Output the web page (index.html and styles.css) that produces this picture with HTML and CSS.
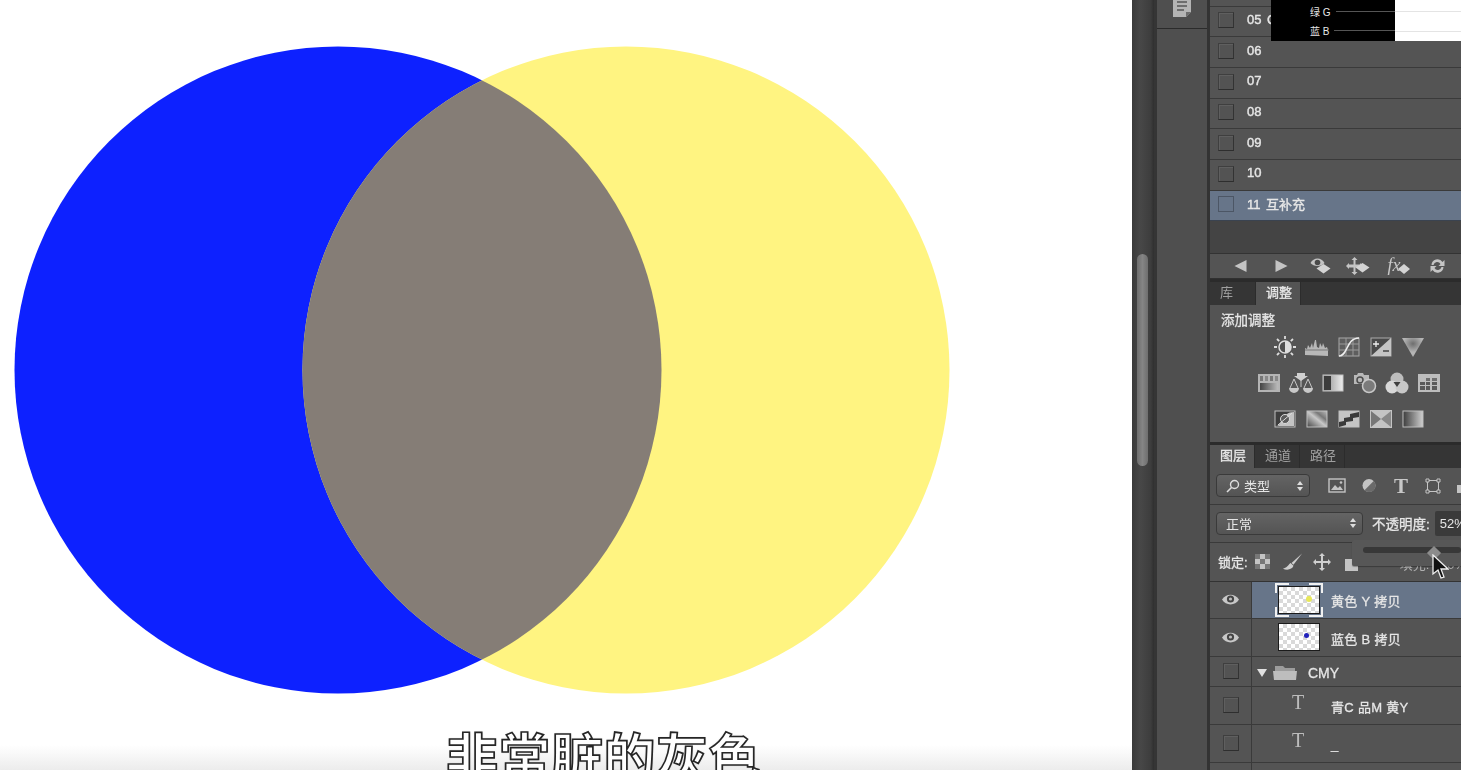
FILE: index.html
```html
<!DOCTYPE html>
<html lang="zh-CN">
<head>
    <meta charset="UTF-8">
    <meta name="viewport" content="width=device-width, initial-scale=1.0">
    <title>互补色 Photoshop</title>
    <link rel="stylesheet" href="styles.css">
</head>
<body>
    <div class="app">
        <main class="canvas">
            <svg class="circles" width="1132" height="770" viewBox="0 0 1132 770">
                <defs>
                    <clipPath id="blueClip"><circle cx="338" cy="370" r="323.5"/></clipPath>
                </defs>
                <circle cx="338" cy="370" r="323.5" fill="#0d21ff"/>
                <circle cx="626" cy="370" r="323.5" fill="#fff481"/>
                <circle cx="626" cy="370" r="323.5" fill="#857d76" clip-path="url(#blueClip)"/>
            </svg>
            <div class="subtitle">非常脏的灰色</div>
        </main>

        <div class="scroll-strip"><div class="scroll-thumb"></div></div>

        <div class="tool-col">
            <div class="tool-cell">
                <svg width="20" height="18" viewBox="0 0 20 18"><path d="M1 0h18v13l-5 5H1z" fill="#b4b4b4"/><path d="M14 18v-5h5z" fill="#6d6d6d"/><path d="M5 3h10M5 7h10M5 11h7" stroke="#555" stroke-width="1.600"/></svg>
            </div>
        </div>

        <aside class="panel">
            <div class="actions">
                <div class="action-top"></div>
                <div class="row action-row first"><span class="check"></span><span class="row-label">05 C</span></div>
                <div class="row action-row"><span class="check"></span><span class="row-label">06</span></div>
                <div class="row action-row"><span class="check"></span><span class="row-label">07</span></div>
                <div class="row action-row"><span class="check"></span><span class="row-label">08</span></div>
                <div class="row action-row"><span class="check"></span><span class="row-label">09</span></div>
                <div class="row action-row"><span class="check"></span><span class="row-label">10</span></div>
                <div class="row action-row selected"><span class="check"></span><span class="row-label">11 互补充</span></div>
                <div class="action-empty"></div>
            </div>

            <div class="action-bar">
                <svg width="14" height="14" viewBox="0 0 14 14"><path d="M13 1v12L1 7z" fill="#c4c4c4"/></svg>
                <svg width="14" height="14" viewBox="0 0 14 14"><path d="M1 1v12l12-6z" fill="#c4c4c4"/></svg>
                <svg width="22" height="18" viewBox="0 0 22 18"><path d="M1 6c3-6 11-6 14 0-3 4-11 4-14 0z" fill="#c4c4c4"/><circle cx="8" cy="5.500" r="2.800" fill="#4a4a4a"/><path d="M14 7l7 4.500-7 5-7-5z" fill="#d4d4d4"/></svg>
                <svg width="24" height="20" viewBox="0 0 24 20"><path d="M9 1l3 3h-2v4.500h4.500V7l3 3-3 3v-1.500H10V16h2l-3 3-3-3h2v-4.500H3.500V13l-3-3 3-3v1.500H8V4H6z" fill="#c4c4c4"/><path d="M17 7l7 4.500-7 5-7-5z" fill="#d4d4d4"/></svg>
                <span class="fx-wrap"><span class="fx">fx</span><svg width="12" height="10" viewBox="0 0 12 10"><path d="M6 0l6 5-6 5-6-5z" fill="#d4d4d4"/></svg></span>
                <svg width="18" height="18" viewBox="0 0 18 18"><path d="M3 8a6 6 0 0 1 11-3l2-2v6h-6l2-2a3.800 3.800 0 0 0-7 1zM15 10a6 6 0 0 1-11 3l-2 2V9h6l-2 2a3.800 3.800 0 0 0 7-1z" fill="#c4c4c4"/></svg>
            </div>

            <div class="gap first-gap"></div>
            <div class="tabs">
                <span class="tab lib-tab">库</span>
                <span class="tab active">调整</span>
            </div>
            <section class="adjust">
                <div class="adjust-title">添加调整</div>
                <div class="icon-row row-a">
                    <svg width="24" height="24" viewBox="0 0 24 24"><circle cx="12" cy="12" r="6" fill="#4f4f4f" stroke="#ddd" stroke-width="1.500"/><path d="M12 6a6 6 0 0 1 0 12z" fill="#ddd"/><path d="M12 1v3M12 20v3M1 12h3M20 12h3M4 4l2.200 2.200M17.800 17.800L20 20M4 20l2.200-2.200M17.800 6.200L20 4" stroke="#ddd" stroke-width="1.800"/></svg>
                    <svg width="26" height="18" viewBox="0 0 26 18"><path d="M1 17v-7l2 1 1-4 2 3 2-5 1 5 2-8 1 0 1 7 2 1 1-5 2 4 1-4 2 5 2-1 1 3v6z" fill="#b8b8b8"/><path d="M1 12h24" stroke="#777"/></svg>
                    <svg width="22" height="20" viewBox="0 0 22 20"><rect x="1" y="1" width="20" height="18" fill="#5e5e5e" stroke="#a8a8a8"/><path d="M1 7h20M1 13h20M8 1v18M15 1v18" stroke="#9a9a9a"/><path d="M1 19c9 0 7-18 20-18" fill="none" stroke="#eee" stroke-width="1.600"/></svg>
                    <svg width="22" height="20" viewBox="0 0 22 20"><rect x="1" y="1" width="20" height="18" fill="#4a4a4a" stroke="#aaa"/><path d="M1 19L21 1v18z" fill="#c4c4c4"/><path d="M3 7h6M6 4v6" stroke="#eee" stroke-width="1.300"/><path d="M13 14h6" stroke="#444" stroke-width="1.500"/></svg>
                    <svg width="22" height="20" viewBox="0 0 22 20"><defs><radialGradient id="vib" cx="50%" cy="30%" r="45%"><stop offset="0" stop-color="#6e6e6e"/><stop offset="1" stop-color="#b5b5b5"/></radialGradient></defs><path d="M0 1h22L11 20z" fill="url(#vib)"/></svg>
                </div>
                <div class="icon-row row-b">
                    <svg width="22" height="18" viewBox="0 0 22 18"><defs><linearGradient id="hsl" x1="0" x2="1"><stop offset="0" stop-color="#444"/><stop offset="1" stop-color="#bbb"/></linearGradient></defs><rect width="22" height="18" fill="#b5b5b5"/><rect x="2" y="2" width="3" height="5" fill="#777"/><rect x="7" y="2" width="3" height="5" fill="#888"/><rect x="12" y="2" width="3" height="5" fill="#777"/><rect x="17" y="2" width="3" height="5" fill="#888"/><rect x="2" y="9" width="18" height="7" fill="url(#hsl)"/></svg>
                    <svg width="24" height="22" viewBox="0 0 24 22"><path d="M8 1h8v3h3l-7 5-7-5h3z" fill="#d0d0d0"/><path d="M5 7L1 16M5 7l4 9M19 7l-4 9M19 7l4 9M12 8v7" stroke="#c8c8c8" fill="none"/><path d="M0 16h10a5 5 0 0 1-10 0zM14 16h10a5 5 0 0 1-10 0z" fill="#c8c8c8"/></svg>
                    <svg width="22" height="18" viewBox="0 0 22 18"><defs><linearGradient id="bw" x1="0" x2="1"><stop offset="0" stop-color="#888"/><stop offset="1" stop-color="#eee"/></linearGradient></defs><rect x="1" y="1" width="20" height="16" fill="url(#bw)" stroke="#c4c4c4"/><rect x="2" y="2" width="7" height="14" fill="#3c3c3c"/></svg>
                    <svg width="24" height="22" viewBox="0 0 24 22"><path d="M1 3h3l1-2h5l1 2h5v9H1z" fill="#b8b8b8"/><circle cx="7" cy="8" r="3" fill="none" stroke="#4c4c4c" stroke-width="1.500"/><circle cx="16" cy="14" r="6.500" fill="#7b7b7b" stroke="#c8c8c8" stroke-width="1.500"/></svg>
                    <svg width="24" height="22" viewBox="0 0 24 22"><circle cx="12" cy="7" r="6.500" fill="#bdbdbd"/><circle cx="7" cy="15" r="6.500" fill="#d8d8d8"/><circle cx="17" cy="15" r="6.500" fill="#c8c8c8"/><path d="M8.500 10l7 0-3.500 5z" fill="#3f3f3f"/></svg>
                    <svg width="22" height="18" viewBox="0 0 22 18"><rect width="22" height="18" fill="#bdbdbd"/><path d="M8 4h4v3H8zM14 4h5v3h-5z" fill="#6e6e6e"/><path d="M2 8h5v3H2zM8 8h4v3H8zM14 8h5v3h-5zM2 12h5v4H2zM8 12h4v4H8zM14 12h5v4h-5z" fill="#5a5a5a"/></svg>
                </div>
                <div class="icon-row row-c">
                    <svg width="22" height="18" viewBox="0 0 22 18"><rect x="1" y="1" width="20" height="16" fill="#3e3e3e" stroke="#c0c0c0"/><path d="M2 16c7 0 5-14 18-14v14z" fill="#c4c4c4"/><circle cx="11" cy="9" r="4.500" fill="#5a5a5a" stroke="#ddd"/><path d="M4 15L18 3" stroke="#ddd"/></svg>
                    <svg width="22" height="18" viewBox="0 0 22 18"><defs><linearGradient id="pf" x1="0" y1="1" x2="1" y2="0"><stop offset="0" stop-color="#444"/><stop offset=".5" stop-color="#c8c8c8"/><stop offset=".7" stop-color="#777"/><stop offset="1" stop-color="#bbb"/></linearGradient></defs><rect x="1" y="1" width="20" height="16" fill="url(#pf)" stroke="#c0c0c0"/></svg>
                    <svg width="22" height="18" viewBox="0 0 22 18"><rect x="1" y="1" width="20" height="16" fill="#c4c4c4" stroke="#c0c0c0"/><path d="M1 12l5-1v-3l6-1V4l9-2v5l-6 1v3l-7 1v3l-7 2z" fill="#3a3a3a"/></svg>
                    <svg width="22" height="18" viewBox="0 0 22 18"><rect width="22" height="18" fill="#c4c4c4"/><path d="M1 1l10 8L1 17z" fill="#777"/><path d="M21 1l-10 8 10 8z" fill="#888"/></svg>
                    <svg width="22" height="18" viewBox="0 0 22 18"><defs><linearGradient id="gm" x1="0" x2="1"><stop offset="0" stop-color="#3c3c3c"/><stop offset="1" stop-color="#d0d0d0"/></linearGradient></defs><rect x="1" y="1" width="20" height="16" fill="url(#gm)" stroke="#bdbdbd"/></svg>
                </div>
            </section>

            <div class="gap"></div>
            <div class="tabs">
                <span class="tab active">图层</span>
                <span class="tab">通道</span>
                <span class="tab">路径</span>
            </div>
            <section class="layers">
                <div class="tool-row filter-row">
                    <div class="select filter-select">
                        <svg width="14" height="14" viewBox="0 0 14 14"><circle cx="8.500" cy="5.500" r="4" fill="none" stroke="#ddd" stroke-width="1.400"/><path d="M5.500 8.500L1 13" stroke="#ddd" stroke-width="1.600"/></svg>
                        <span>类型</span>
                        <span class="updown"></span>
                    </div>
                    <div class="filter-icons">
                        <svg width="18" height="15" viewBox="0 0 18 15"><rect x="1" y="1" width="16" height="13" fill="none" stroke="#c4c4c4" stroke-width="1.400"/><path d="M3 12l4-5 3 3 2-2 3 4z" fill="#c4c4c4"/><circle cx="13" cy="4.500" r="1.300" fill="#c4c4c4"/></svg>
                        <svg width="15" height="15" viewBox="0 0 15 15"><circle cx="7.500" cy="7.500" r="6.500" fill="#c4c4c4"/><path d="M12.200 3A6.500 6.500 0 0 1 3 12.200z" fill="#6a6a6a"/></svg>
                        <span class="type-t small">T</span>
                        <svg width="16" height="16" viewBox="0 0 16 16"><rect x="2.500" y="2.500" width="11" height="11" fill="none" stroke="#c4c4c4"/><path d="M1 1h3v3H1zM12 1h3v3h-3zM1 12h3v3H1zM12 12h3v3h-3z" fill="#4f4f4f" stroke="#c4c4c4"/></svg>
                        <span class="cut-icon"></span>
                    </div>
                </div>
                <div class="tool-row blend-row">
                    <div class="select blend-select">
                        <span>正常</span>
                        <span class="updown"></span>
                    </div>
                    <span class="field-label">不透明度:</span>
                    <span class="opacity-box">52%</span>
                </div>
                <div class="tool-row lock-row">
                    <span class="field-label lock-label">锁定:</span>
                    <svg class="lock-a" width="15" height="15" viewBox="0 0 15 15"><rect width="15" height="15" fill="#c4c4c4"/><path d="M0 0h5v5H0zM10 0h5v5h-5zM5 5h5v5H5zM0 10h5v5H0zM10 10h5v5h-5z" fill="#777"/></svg>
                    <svg class="lock-b" width="21" height="18" viewBox="0 0 22 18"><path d="M21 0L10 10l2 2z" fill="#cfcfcf"/><path d="M9 10c-2 1-2 4-8 6 4 2 10 1 11-3z" fill="#cfcfcf"/></svg>
                    <svg class="lock-c" width="18" height="18" viewBox="0 0 18 18"><path d="M9 0l3 3h-2v5h5V6l3 3-3 3v-2h-5v5h2l-3 3-3-3h2v-5H3v2L0 9l3-3v2h5V3H6z" fill="#cfcfcf"/></svg>
                    <span class="lock-d"></span>
                    <span class="fill-label">填充: 100%</span>
                </div>

                <div class="layer-row selected">
                    <span class="eye-cell"><svg class="eye" width="17" height="11" viewBox="0 0 17 11"><path d="M0 5.500C4-1 13-1 17 5.500 13 12 4 12 0 5.500z" fill="#c8c8c8"/><circle cx="8.500" cy="5" r="3.600" fill="#444"/><circle cx="8.500" cy="5" r="1.600" fill="#bbb"/></svg></span>
                    <span class="thumb-wrap framed"><span class="thumb"><span class="dot yellow"></span></span></span>
                    <span class="layer-name">黄色 Y 拷贝</span>
                </div>
                <div class="layer-row tall">
                    <span class="eye-cell"><svg class="eye" width="17" height="11" viewBox="0 0 17 11"><path d="M0 5.500C4-1 13-1 17 5.500 13 12 4 12 0 5.500z" fill="#c8c8c8"/><circle cx="8.500" cy="5" r="3.600" fill="#444"/><circle cx="8.500" cy="5" r="1.600" fill="#bbb"/></svg></span>
                    <span class="thumb-wrap"><span class="thumb"><span class="dot blue"></span></span></span>
                    <span class="layer-name">蓝色 B 拷贝</span>
                </div>
                <div class="layer-row group">
                    <span class="eye-cell"><span class="check"></span></span>
                    <span class="arrow"></span>
                    <svg class="folder" width="24" height="15" viewBox="0 0 24 15"><path d="M2 3V1h8l2 2h10v3H2z" fill="#9c9c9c"/><path d="M0 6h24l-1 9H1z" fill="#bdbdbd"/></svg>
                    <span class="layer-name group-name">CMY</span>
                </div>
                <div class="layer-row tall">
                    <span class="eye-cell"><span class="check"></span></span>
                    <span class="type-t">T</span>
                    <span class="layer-name">青C 品M 黄Y</span>
                </div>
                <div class="layer-row tall">
                    <span class="eye-cell"><span class="check"></span></span>
                    <span class="type-t">T</span>
                    <span class="layer-name">_</span>
                </div>
                <div class="layer-row"><span class="eye-cell"></span></div>
            </section>
        </aside>

        <!-- colour chart video overlay, top of the panel -->
        <div class="overlay">
            <div class="overlay-black">
                <div class="overlay-line"><span>绿 G</span><i></i></div>
                <div class="overlay-line"><span>蓝 B</span><i></i></div>
            </div>
            <div class="overlay-white">
                <div class="white-line"></div>
                <div class="white-line"></div>
            </div>
        </div>

        <!-- opacity slider popup -->
        <div class="slider-pop">
            <div class="slider-track"></div>
            <div class="slider-knob"></div>
        </div>
        <svg class="cursor" width="18" height="25" viewBox="0 0 18 25"><path d="M2 1v19l5-4 3 8 3-1-3-8h7z" fill="#111" stroke="#eee" stroke-width="1.300"/></svg>
    </div>
</body>
</html>
```

FILE: styles.css
```css
* {
    box-sizing: border-box;
}
html, body {
    margin: 0;
    height: 100%;
    overflow: hidden;
}
body {
    font-family: "Liberation Sans", "Noto Sans CJK SC", sans-serif;
    background: #fff;
    color: #e6e6e6;
}
.app {
    position: relative;
    display: flex;
    width: 1461px;
    height: 770px;
    overflow: hidden;
}

/* canvas */
.canvas {
    position: relative;
    width: 1132px;
    height: 770px;
    background: linear-gradient(to bottom, #fff 0, #fff 745px, #ececec 770px);
    overflow: hidden;
}
.circles {
    position: absolute;
    left: 0;
    top: 0;
}
.subtitle {
    position: absolute;
    left: 446px;
    top: 720px;
    width: 330px;
    font-family: "Noto Sans CJK SC", sans-serif;
    font-size: 52px;
    font-weight: bold;
    letter-spacing: 0.5px;
    line-height: 70px;
    white-space: nowrap;
    color: #fff;
    -webkit-text-stroke: 1.700px #262626;
    text-shadow: 0 0 2px #999;
}

/* left strips */
.scroll-strip {
    width: 22px;
    flex-shrink: 0;
    background: linear-gradient(to right, #3a3a3a, #474747 40%, #3d3d3d 85%, #2f2f2f);
    padding: 254px 0 0 5px;
}
.scroll-thumb {
    width: 11px;
    height: 212px;
    border-radius: 6px;
    background: linear-gradient(to right, #6e6e6e, #858585 50%, #6e6e6e);
}
.tool-col {
    width: 56px;
    flex-shrink: 0;
    background: #4f4f4f;
    border-left: 3px solid #353535;
    border-right: 3px solid #333;
}
.tool-cell {
    height: 29px;
    border-bottom: 1px solid #2b2b2b;
    display: flex;
    justify-content: center;
    align-items: flex-end;
    padding-bottom: 11px;
}

/* panel */
.panel {
    width: 251px;
    flex-shrink: 0;
    background: #2f2f2f;
    display: flex;
    flex-direction: column;
    font-size: 13px;
    filter: blur(0.35px);
}
.check {
    display: block;
    width: 16px;
    height: 16px;
    background: #535353;
    border: 1px solid #3f3f3f;
    border-right-color: #333;
    border-bottom-color: #2e2e2e;
    box-shadow: inset 1px 1px 0 #5f5f5f;
}
.action-top {
    height: 6.500px;
    background: #545454;
    border-bottom: 1px solid #3a3a3a;
}
.row {
    display: flex;
    align-items: center;
}
.action-row {
    height: 30.700px;
    background: #545454;
    border-bottom: 1px solid #3a3a3a;
    padding-left: 8px;
}
.action-row .check {
    margin-bottom: 2px;
}
.action-row.selected {
    height: 30px;
    background: #677589;
    border-bottom-color: #3a4350;
}
.action-row.selected .check {
    background: #677589;
    border-color: #4c5665;
    box-shadow: none;
}
.row-label {
    margin: 0 0 4px 13px;
    font-size: 13px;
    -webkit-text-stroke: 0.4px #e6e6e6;
    word-spacing: 2px;
}
.action-empty {
    height: 32px;
    background: #444;
}
.action-bar {
    height: 26px;
    background: #545454;
    border-top: 1px solid #333;
    border-bottom: 1px solid #303030;
    display: flex;
    align-items: center;
    padding-left: 11px;
}
.action-bar > svg,
.action-bar > .fx-wrap {
    flex: 0 0 39px;
}
.action-bar > svg:nth-child(2),
.action-bar > .fx-wrap {
    margin-left: 2px;
}
.action-bar > svg:nth-child(4) {
    margin-left: -2px;
}
.fx-wrap {
    display: flex;
    align-items: flex-end;
    justify-content: center;
}
.fx {
    font-family: "Liberation Serif", serif;
    font-style: italic;
    font-size: 18px;
    font-weight: normal;
    color: #c8c8c8;
    line-height: 17px;
}
.fx-wrap svg {
    margin-left: -3px;
}
.gap {
    height: 3px;
    background: #2b2b2b;
}
.first-gap {
    height: 3.300px;
}
.tabs {
    height: 23px;
    background: #353535;
    display: flex;
}
.tab {
    width: 45px;
    padding-left: 10px;
    line-height: 22px;
    font-weight: normal;
    color: #a0a0a0;
    border-right: 1px solid #2c2c2c;
}
.lib-tab {
    width: 46px;
}
.tab.active {
    background: #545454;
    color: #e8e8e8;
    -webkit-text-stroke: 0.3px #e8e8e8;
}
.adjust {
    height: 137px;
    background: #545454;
    padding: 7px 0 0 11px;
}
.adjust-title {
    line-height: 17px;
    font-size: 13.500px;
    -webkit-text-stroke: 0.3px #e6e6e6;
}
.icon-row {
    display: flex;
    align-items: center;
    height: 24px;
}
.icon-row svg {
    flex: 0 0 32px;
}
.row-a {
    margin: 6px 0 0 48px;
}
.row-b {
    margin: 12px 0 0 32px;
}
.row-c {
    margin: 12px 0 0 48px;
}
.layers {
    flex: 1;
    background: #545454;
    overflow: hidden;
}
.tool-row {
    display: flex;
    align-items: center;
    border-bottom: 1px solid #3a3a3a;
}
.filter-row {
    height: 37px;
    padding-left: 6px;
}
.blend-row {
    height: 38px;
    padding-left: 6px;
}
.lock-row {
    height: 39px;
    padding-left: 8px;
    border-bottom-color: #333;
}
.select {
    flex-shrink: 0;
    height: 23px;
    display: flex;
    align-items: center;
    gap: 4px;
    background: linear-gradient(to bottom, #646464, #545454);
    border: 1px solid #3a3a3a;
    border-radius: 4px;
    padding-left: 9px;
    font-weight: normal;
    position: relative;
}
.filter-select {
    width: 94px;
}
.blend-select {
    width: 147px;
}
.updown {
    position: absolute;
    right: 6px;
    top: 5.500px;
    width: 0;
    height: 0;
    border-left: 3.500px solid transparent;
    border-right: 3.500px solid transparent;
    border-bottom: 4px solid #ddd;
}
.updown::after {
    content: "";
    position: absolute;
    left: -3.500px;
    top: 6px;
    border-left: 3.500px solid transparent;
    border-right: 3.500px solid transparent;
    border-top: 4px solid #ddd;
}
.filter-icons {
    display: flex;
    align-items: center;
    margin-left: 11px;
}
.filter-icons > svg,
.filter-icons > .type-t {
    flex: 0 0 32px;
    text-align: center;
}
.type-t {
    font-family: "Liberation Serif", serif;
    font-weight: normal;
    font-size: 20px;
    line-height: 20px;
    color: #bcbcbc;
}
.type-t.small {
    font-size: 21px;
    font-weight: bold;
    color: #c8c8c8;
}
.cut-icon {
    width: 4px;
    height: 8px;
    background: #c4c4c4;
    margin: 7px 0 0 8px;
    flex-shrink: 0;
}
.field-label {
    flex-shrink: 0;
    font-size: 13.500px;
    -webkit-text-stroke: 0.3px #e6e6e6;
    white-space: nowrap;
}
.blend-row .field-label {
    margin-left: 9px;
}
.lock-label {
    font-size: 13px;
}
.opacity-box {
    flex-shrink: 0;
    margin-left: 5px;
    width: 40px;
    height: 25px;
    line-height: 25px;
    padding-left: 5px;
    background: #3a3a3a;
    font-weight: normal;
    font-size: 13px;
    border-radius: 2px;
    white-space: nowrap;
}
.lock-a {
    margin-left: 7px;
    flex-shrink: 0;
}
.lock-b {
    margin-left: 12px;
    flex-shrink: 0;
}
.lock-c {
    margin-left: 10px;
    flex-shrink: 0;
}
.lock-d {
    flex-shrink: 0;
    width: 13px;
    height: 12px;
    margin: 7px 0 0 14px;
    background: #c4c4c4;
}
.fill-label {
    margin: 3px 0 0 42px;
    font-size: 13px;
    color: #b0b0b0;
    white-space: nowrap;
}
.layer-row {
    height: 30px;
    display: flex;
    align-items: center;
    background: #545454;
    border-bottom: 1px solid #3a3a3a;
}
.layer-row.tall {
    height: 38px;
}
.layer-row.selected {
    height: 37px;
    background: linear-gradient(to right, #545454 42px, #677589 42px);
}
.eye-cell {
    width: 42px;
    height: 100%;
    display: flex;
    align-items: center;
    justify-content: center;
    border-right: 1px solid #3a3a3a;
    flex-shrink: 0;
}
.thumb-wrap {
    margin-left: 23px;
    width: 48px;
    height: 34px;
    padding: 3px;
    flex-shrink: 0;
}
/* corner brackets round the active layer */
.thumb-wrap.framed {
    background:
        linear-gradient(#f0f0f0, #f0f0f0) 0 0 / 14px 2px,
        linear-gradient(#f0f0f0, #f0f0f0) 0 0 / 2px 10px,
        linear-gradient(#f0f0f0, #f0f0f0) 100% 0 / 14px 2px,
        linear-gradient(#f0f0f0, #f0f0f0) 100% 0 / 2px 10px,
        linear-gradient(#f0f0f0, #f0f0f0) 0 100% / 14px 2px,
        linear-gradient(#f0f0f0, #f0f0f0) 0 100% / 2px 10px,
        linear-gradient(#f0f0f0, #f0f0f0) 100% 100% / 14px 2px,
        linear-gradient(#f0f0f0, #f0f0f0) 100% 100% / 2px 10px;
    background-repeat: no-repeat;
}
.thumb {
    display: block;
    position: relative;
    width: 42px;
    height: 28px;
    border: 1px solid #1b1b1b;
    background-color: #fff;
    background-image: conic-gradient(#d9d9d9 25%, #fff 0 50%, #d9d9d9 0 75%, #fff 0);
    background-size: 8px 8px;
}
.dot {
    position: absolute;
    left: 25px;
    top: 9px;
    width: 5px;
    height: 5px;
    border-radius: 50%;
}
.dot.yellow {
    left: 27px;
    width: 6px;
    height: 6px;
    background: #e8e85a;
}
.dot.blue {
    background: #2222bb;
}
.layer-name {
    margin: 2px 0 0 8px;
    font-size: 13px;
    letter-spacing: 0.3px;
    -webkit-text-stroke: 0.3px #e6e6e6;
    white-space: nowrap;
}
.group-name {
    font-size: 14px;
    margin: 4px 0 0 11px;
    letter-spacing: 0;
}
.arrow {
    margin: 3px 0 0 5px;
    width: 0;
    height: 0;
    border-left: 5px solid transparent;
    border-right: 5px solid transparent;
    border-top: 8px solid #e0e0e0;
}
.folder {
    margin: 2px 0 0 6px;
}
.layer-row .type-t {
    margin: -6px 0 0 40px;
    width: 31px;
}

/* things lying over the panel */
.overlay {
    position: absolute;
    left: 1271px;
    top: 0;
    width: 190px;
    height: 41px;
    display: flex;
    font-size: 10px;
    font-weight: normal;
}
.overlay-black {
    width: 124px;
    background: #000;
    padding-top: 2px;
}
.overlay-line {
    height: 19px;
    display: flex;
    align-items: center;
    padding-left: 39px;
    color: #e8e8e8;
}
.overlay-line i {
    display: block;
    flex: 1;
    height: 1px;
    background: #555;
    margin-left: 5px;
}
.overlay-white {
    flex: 1;
    background: #fff;
    padding-top: 11px;
}
.white-line {
    height: 1px;
    background: #e4e4e4;
    margin-bottom: 19px;
}
.slider-pop {
    position: absolute;
    left: 1352px;
    top: 540px;
    width: 109px;
    height: 26px;
    background: #575757;
    border-radius: 2px 0 0 2px;
    box-shadow: 0 1px 1px rgba(0, 0, 0, 0.3);
}
.slider-track {
    margin: 7px 0 0 11px;
    height: 6px;
    background: #383838;
    border-radius: 3px;
}
.slider-knob {
    position: absolute;
    left: 77px;
    top: 8px;
    width: 10px;
    height: 10px;
    background: #8c8c8c;
    transform: rotate(45deg);
}
.cursor {
    position: absolute;
    left: 1431px;
    top: 554px;
}
```
